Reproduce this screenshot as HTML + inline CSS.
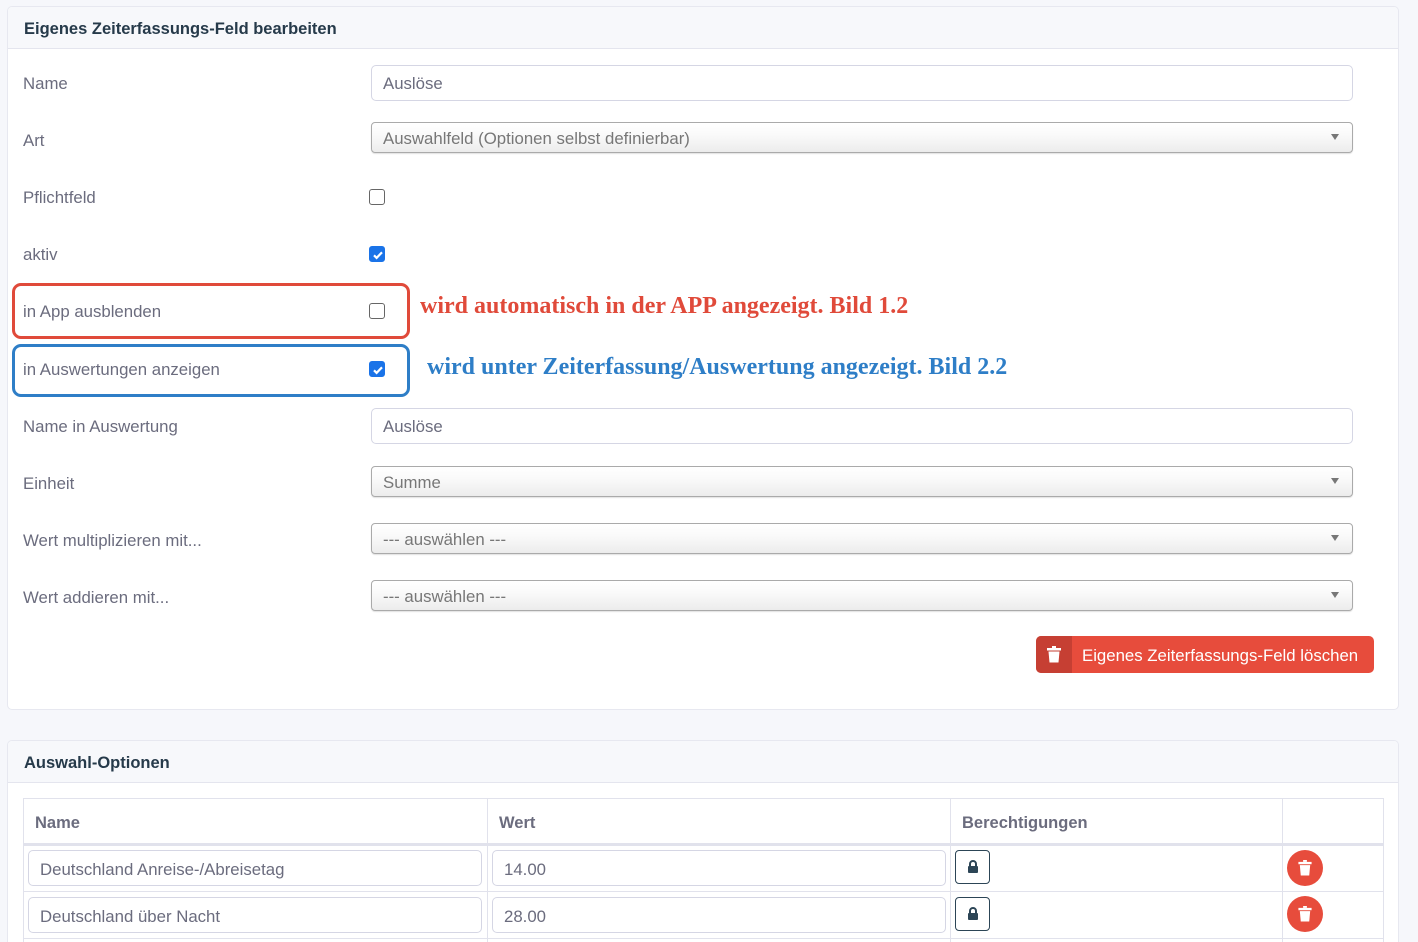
<!DOCTYPE html>
<html><head><meta charset="utf-8"><style>
*{box-sizing:border-box;margin:0;padding:0}
html,body{width:1418px;height:942px;overflow:hidden}
body{background:#f6f7fb;font-family:"Liberation Sans",sans-serif;position:relative;color:#6b6c7e}
.a{position:absolute}
.card{position:absolute;left:7px;width:1392px;background:#fff;border:1px solid #e7e8f0;border-radius:5px;overflow:hidden}
.hd{height:42px;background:#f7f8fb;border-bottom:1px solid #e4e5ee;padding:0 16px;font-weight:bold;font-size:16.5px;color:#263a4a;line-height:44px}
.lbl{position:absolute;left:23px;font-size:16.8px;color:#6b6c7e;transform:translateY(-45%)}
.inp{position:absolute;left:371px;width:982px;height:36px;border:1px solid #d5d6e4;border-radius:5px;background:#fff;font-size:16.8px;color:#6b6c7e;padding-left:11px;line-height:36px}
.sel{position:absolute;left:371px;width:982px;height:31px;border:1px solid #aaa;border-radius:4px;background:linear-gradient(#fff,#fafafa 40%,#ececec);font-size:16.8px;color:#777;padding-left:11px;line-height:31px;box-shadow:0 1px 1px rgba(0,0,0,.12)}
.sel:after{content:"";position:absolute;right:13px;top:11px;border:4px solid transparent;border-top:6px solid #777;border-bottom:0}
.cb{position:absolute;left:369px;width:16px;height:16px;border:1px solid #666;border-radius:3px;background:#fff}
.cb.on{background:#1a73e8;border-color:#1a73e8}
.cb.on svg{position:absolute;left:1px;top:1px}
.ann{position:absolute;font-family:"Liberation Serif",serif;font-weight:bold;font-size:24px}
.ti{position:absolute;height:36px;border:1px solid #d5d6e4;border-radius:5px;font-size:16.8px;color:#6b6c7e;padding-left:11px;line-height:37px;background:#fff}
.lock{position:absolute;left:955px;width:35px;height:34px;border:1.5px solid #2c4556;border-radius:4px}
.del{position:absolute;left:1287px;width:36px;height:36px;border-radius:50%;background:#e74c3c}
.th{position:absolute;top:814px;font-weight:bold;font-size:16.5px;color:#6b6c7e}
</style></head><body>
<div class="card" style="top:6px;height:704px"><div class="hd">Eigenes Zeiterfassungs-Feld bearbeiten</div></div>
<div class="lbl" style="top:83px">Name</div>
<div class="inp" style="top:65px">Auslöse</div>
<div class="lbl" style="top:140px">Art</div>
<div class="sel" style="top:122px">Auswahlfeld (Optionen selbst definierbar)</div>
<div class="lbl" style="top:197px">Pflichtfeld</div>
<div class="cb" style="top:189px"></div>
<div class="lbl" style="top:254px">aktiv</div>
<div class="cb on" style="top:246px"><svg width="14" height="14" viewBox="0 0 14 14"><path d="M3 7.3l2.6 2.6L11 4.3" stroke="#fff" stroke-width="2.2" fill="none"/></svg></div>
<div class="lbl" style="top:311px">in App ausblenden</div>
<div class="cb" style="top:303px"></div>
<div class="lbl" style="top:369px">in Auswertungen anzeigen</div>
<div class="cb on" style="top:361px"><svg width="14" height="14" viewBox="0 0 14 14"><path d="M3 7.3l2.6 2.6L11 4.3" stroke="#fff" stroke-width="2.2" fill="none"/></svg></div>
<div class="a" style="left:12px;top:283px;width:398px;height:56px;border:3px solid #e04a3a;border-radius:9px"></div>
<div class="a" style="left:12px;top:344px;width:398px;height:53px;border:3px solid #2e7ec7;border-radius:9px"></div>
<div class="ann" style="left:420px;top:293px;color:#e04a3a">wird automatisch in der APP angezeigt. Bild 1.2</div>
<div class="ann" style="left:427px;top:354px;color:#2e7ec7">wird unter Zeiterfassung/Auswertung angezeigt. Bild 2.2</div>
<div class="lbl" style="top:426px">Name in Auswertung</div>
<div class="inp" style="top:408px">Auslöse</div>
<div class="lbl" style="top:483px">Einheit</div>
<div class="sel" style="top:466px">Summe</div>
<div class="lbl" style="top:540px">Wert multiplizieren mit...</div>
<div class="sel" style="top:523px">--- auswählen ---</div>
<div class="lbl" style="top:597px">Wert addieren mit...</div>
<div class="sel" style="top:580px">--- auswählen ---</div>
<div class="a" style="left:1036px;top:636px;width:338px;height:37px;background:#e74c3c;border-radius:5px;overflow:hidden;color:#fff;font-size:16.8px;line-height:39px">
<div class="a" style="left:0;top:0;width:36px;height:37px;background:#c63f33"></div>
<svg class="a" style="left:11px;top:10px" width="14" height="17" viewBox="0 0 14 17"><rect x="0" y="2" width="14" height="2.5" fill="#fff"/><rect x="5" y="0" width="4" height="2" fill="#fff"/><path d="M1.5 5.5h11l-1 11h-9z" fill="#fff"/></svg>
<span class="a" style="left:46px;top:0">Eigenes Zeiterfassungs-Feld löschen</span></div>

<div class="card" style="top:740px;height:210px"><div class="hd">Auswahl-Optionen</div></div>
<div class="a" style="left:23px;top:798px;width:1361px;height:150px;border:1px solid #e1e2ec"></div>
<div class="a" style="left:23px;top:843px;width:1361px;height:3px;background:#e1e2ec"></div>
<div class="a" style="left:23px;top:891px;width:1361px;height:1px;background:#e1e2ec"></div>
<div class="a" style="left:23px;top:938px;width:1361px;height:1px;background:#e1e2ec"></div>
<div class="a" style="left:487px;top:798px;width:1px;height:150px;background:#e1e2ec"></div>
<div class="a" style="left:950px;top:798px;width:1px;height:150px;background:#e1e2ec"></div>
<div class="a" style="left:1282px;top:798px;width:1px;height:150px;background:#e1e2ec"></div>
<div class="th" style="left:35px">Name</div>
<div class="th" style="left:499px">Wert</div>
<div class="th" style="left:962px">Berechtigungen</div>
<div class="ti" style="left:28px;top:850px;width:454px">Deutschland Anreise-/Abreisetag</div>
<div class="ti" style="left:492px;top:850px;width:454px">14.00</div>
<div class="ti" style="left:28px;top:897px;width:454px">Deutschland über Nacht</div>
<div class="ti" style="left:492px;top:897px;width:454px">28.00</div>
<div class="lock" style="top:850px"><svg class="a" style="left:11px;top:9px" width="12" height="14" viewBox="0 0 12 14"><path d="M3 6V4a3 3 0 016 0v2" stroke="#2c4556" stroke-width="2" fill="none"/><rect x="1" y="6" width="10" height="7" rx="1" fill="#2c4556"/></svg></div>
<div class="lock" style="top:897px"><svg class="a" style="left:11px;top:9px" width="12" height="14" viewBox="0 0 12 14"><path d="M3 6V4a3 3 0 016 0v2" stroke="#2c4556" stroke-width="2" fill="none"/><rect x="1" y="6" width="10" height="7" rx="1" fill="#2c4556"/></svg></div>
<div class="del" style="top:850px"><svg class="a" style="left:11px;top:10px" width="14" height="16" viewBox="0 0 14 17"><rect x="0" y="2" width="14" height="2.5" fill="#fff"/><rect x="5" y="0" width="4" height="2" fill="#fff"/><path d="M1.5 5.5h11l-1 11h-9z" fill="#fff"/></svg></div>
<div class="del" style="top:896px"><svg class="a" style="left:11px;top:10px" width="14" height="16" viewBox="0 0 14 17"><rect x="0" y="2" width="14" height="2.5" fill="#fff"/><rect x="5" y="0" width="4" height="2" fill="#fff"/><path d="M1.5 5.5h11l-1 11h-9z" fill="#fff"/></svg></div>
</body></html>
